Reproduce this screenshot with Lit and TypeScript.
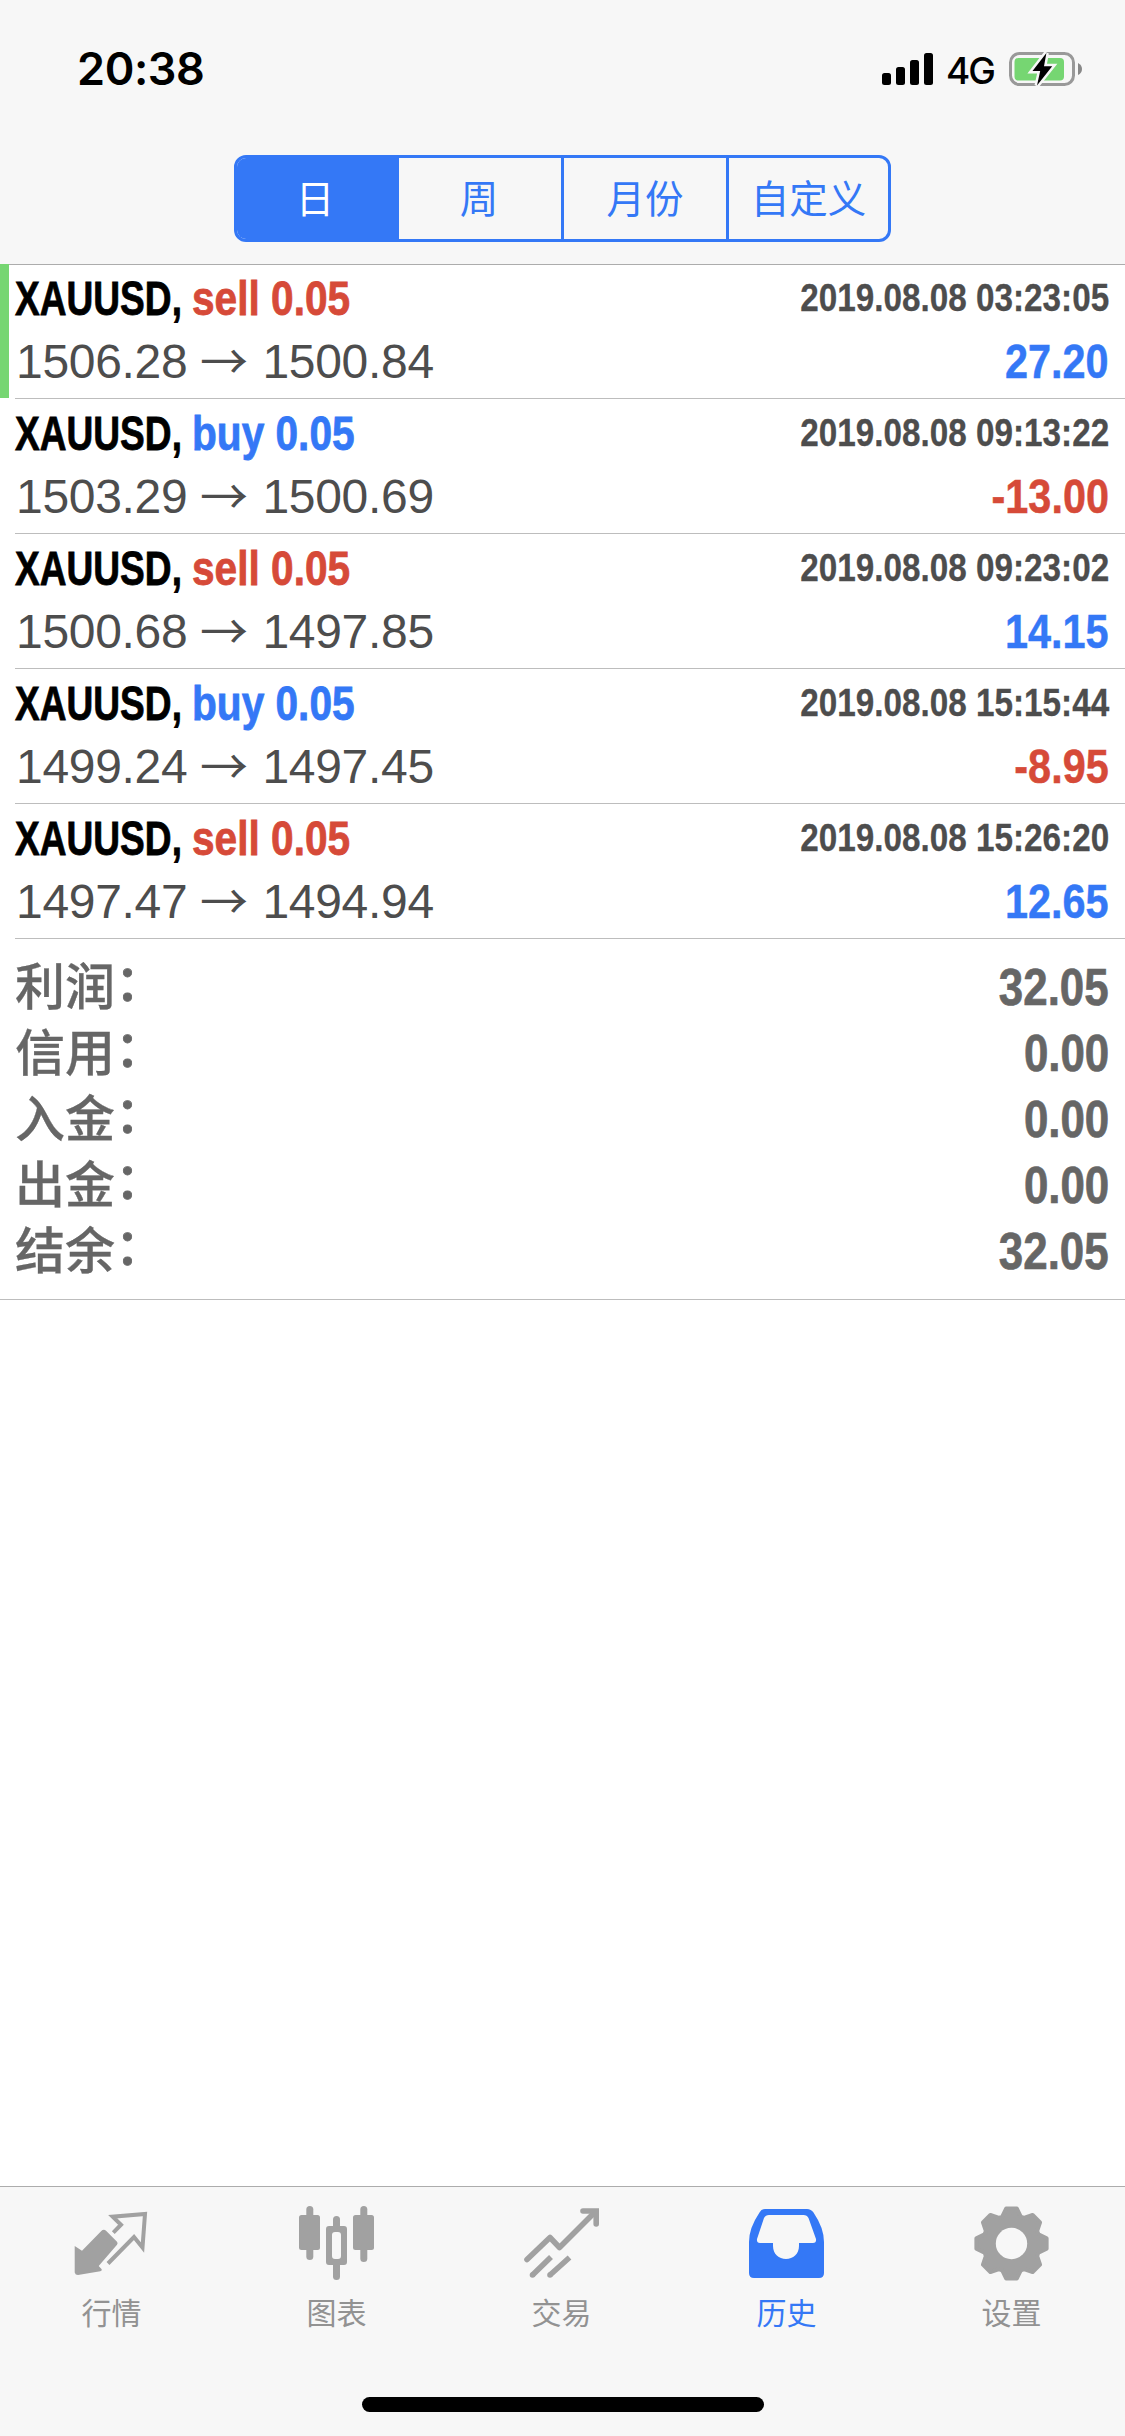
import { LitElement, html, css, svg } from "lit";
import { customElement, property } from "lit/decorators.js";

interface Deal { side: "buy" | "sell"; open: string; close: string; time: string; profit: string; marked?: boolean }

const DEALS: Deal[] = [
  { side: "sell", open: "1506.28", close: "1500.84", time: "2019.08.08 03:23:05", profit: "27.20", marked: true },
  { side: "buy", open: "1503.29", close: "1500.69", time: "2019.08.08 09:13:22", profit: "-13.00" },
  { side: "sell", open: "1500.68", close: "1497.85", time: "2019.08.08 09:23:02", profit: "14.15" },
  { side: "buy", open: "1499.24", close: "1497.45", time: "2019.08.08 15:15:44", profit: "-8.95" },
  { side: "sell", open: "1497.47", close: "1494.94", time: "2019.08.08 15:26:20", profit: "12.65" },
];

const TOTALS: [string, string][] = [["利润", "32.05"], ["信用", "0.00"], ["入金", "0.00"], ["出金", "0.00"], ["结余", "32.05"]];

// Outline of the eight-toothed cog, one tooth every 45 degrees.
const gear = () => {
  const pts: string[] = [];
  for (let i = 0; i < 8; i++) {
    for (const [d, r] of [[-19, 28.5], [-8.5, 35.5], [8.5, 35.5], [19, 28.5]]) {
      const a = ((i * 45 + d) * Math.PI) / 180;
      pts.push(`${(37.5 + r * Math.sin(a)).toFixed(2)},${(37.5 - r * Math.cos(a)).toFixed(2)}`);
    }
  }
  return `M${pts.join("L")}Z`;
};

const ICONS = {
  quotes: svg`<path d="M0.700 40L8 44.700L27.300 25Q29.700 22.700 32.300 25L43 35.700Q44.200 37.200 43 38.700L24.700 60L27.700 63.300Q28.300 65 26.300 65.300L4 69Q1.300 69 0.700 66.500Z" fill="currentColor"/>
    <path d="M39.300 26.700L47 18.700L38.700 10.700L71 8L68.500 41.500L60 31L34 57.500" fill="none" stroke="currentColor" stroke-width="4"/>`,
  chart: svg`<g fill="currentColor"><rect x="7.300" y="0" width="7" height="54" rx="3.500"/><rect x="0" y="9" width="21" height="35" rx="2.500"/>
    <rect x="61.300" y="0" width="7" height="56" rx="3.500"/><rect x="54" y="9" width="21" height="35" rx="2.500"/>
    <rect x="34" y="10" width="7" height="14" rx="3.500"/><rect x="34" y="55" width="7" height="19" rx="3.500"/>
    <path fill-rule="evenodd" d="M30 20H45Q48 20 48 23V56Q48 59 45 59H30Q27 59 27 56V23Q27 20 30 20ZM36 26Q33 26 33 29V50Q33 53 36 53H39Q42 53 42 50V29Q42 26 39 26Z"/></g>`,
  trade: svg`<g fill="none" stroke="currentColor" stroke-width="5.600" stroke-linecap="round" stroke-linejoin="round"><path d="M3 53.500L26 31.500L35.500 41.500L70 7"/><path d="M59 5H72.200V18" stroke-linejoin="miter"/></g>
    <path d="M8.500 69L27 51M26 69L45.500 51.500" fill="none" stroke="currentColor" stroke-width="5.600"/><circle cx="8.500" cy="69" r="2.800" fill="currentColor"/><circle cx="26" cy="69" r="2.800" fill="currentColor"/>`,
  history: svg`<path fill="currentColor" fill-rule="evenodd" d="M16 3H58Q62 3 64.500 6.500Q75 22 75 36V67Q75 72 70 72H5Q0 72 0 67V36Q0 22 10.500 6.500Q12.500 3 16 3ZM20 9Q16.500 9 15 12L8 33Q7.500 37 11 37H24V40C24 48 30 53 37 53S50 48 50 40V37H64Q67.500 37 67 33L59.500 12Q58 9 54.500 9Z"/>`,
  settings: svg`<path d=${gear()} fill="currentColor" stroke="currentColor" stroke-width="4" stroke-linejoin="round"/><circle cx="37.500" cy="37.500" r="15.700" fill="#f7f7f7"/>`,
};

const TABS: [keyof typeof ICONS, string][] = [["quotes", "行情"], ["chart", "图表"], ["trade", "交易"], ["history", "历史"], ["settings", "设置"]];

@customElement("status-bar")
class StatusBar extends LitElement {
  static styles = css`
    :host { display: flex; height: 132px; padding: 0 43px 0 77px; box-sizing: border-box; justify-content: space-between; font-family: Inter, sans-serif; color: #000; }
    .time { font-size: 45px; font-weight: 600; line-height: 54px; margin-top: 42px; letter-spacing: -0.4px; }
    .right { display: flex; align-items: flex-start; }
    .signal { margin-top: 52px; width: 51px; height: 34px; }
    .net { width: 48px; font-size: 37px; font-weight: 450; line-height: 42px; margin: 50px 14px 0 13px; letter-spacing: -2px; }
    .battery { margin-top: 50px; width: 74px; height: 38px; }
  `;
  render() {
    return html`<div class="time">20:38</div>
      <div class="right">
        <svg class="signal" viewBox="0 0 51 34"><rect x="0" y="21" width="9" height="12" rx="2.500"/><rect x="14" y="15" width="9" height="18" rx="2.500"/><rect x="28" y="8" width="9" height="25" rx="2.500"/><rect x="42" y="1" width="9" height="32" rx="2.500"/></svg>
        <div class="net">4G</div>
        <svg class="battery" viewBox="0 0 74 38"><rect x="2.500" y="3.500" width="63" height="31" rx="9" fill="none" stroke="#999" stroke-width="3"/><path d="M70 13Q74 15 74 19T70 25Z" fill="#888"/><rect x="6.500" y="8" width="49.500" height="22.500" rx="4" fill="#76d672"/><path d="M38.400 3L24.500 21H32.200L29 35.500L44.200 16.300H36Z" fill="#000" stroke="#f7f7f7" stroke-width="5" paint-order="stroke"/></svg>
      </div>`;
  }
}

@customElement("deal-row")
class DealRow extends LitElement {
  @property({ attribute: false }) deal!: Deal;
  static styles = css`
    :host { display: flex; height: 135px; flex: none; font-family: "Liberation Sans", sans-serif; }
    .mark { width: 9px; height: 134px; margin-right: 6px; flex: none; }
    .on { background: #76d672; }
    .body { flex: 1; box-sizing: border-box; height: 135px; border-bottom: 1px solid #bdbdbd; padding: 2px 16px 0 0; }
    .line { display: flex; justify-content: space-between; white-space: pre; height: 63px; line-height: 63px; }
    .low { line-height: 64px; }
    .title { display: flex; font-size: 49px; line-height: 65px; font-weight: 700; -webkit-text-stroke: 0.8px currentColor; }
    .name { width: 177px; transform: scaleX(0.757); transform-origin: 0 0; }
    .side { transform: scaleX(0.829); transform-origin: 0 0; }
    .time { font-size: 39px; font-weight: 700; transform: scaleX(0.853); transform-origin: 100% 0; color: #4d4d4d; -webkit-text-stroke: 0.3px currentColor; }
    .profit { font-size: 49px; font-weight: 700; transform: scaleX(0.845); transform-origin: 100% 0; -webkit-text-stroke: 0.5px currentColor; }
    .price { display: flex; font-size: 48px; line-height: 66px; color: #4d4d4d; letter-spacing: -0.3px; padding-left: 1px; }
    .arrow { width: 75px; text-align: center; font-family: "Noto Sans CJK SC", sans-serif; font-weight: 400; letter-spacing: 0; transform: translate(-1px, -4px); }
    .sell, .neg { color: #d64a38; }
    .buy, .pos { color: #3478f6; }
  `;
  render() {
    const d = this.deal;
    return html`<div class="mark ${d.marked ? "on" : ""}"></div>
      <div class="body">
        <div class="line"><div class="title"><span class="name">XAUUSD, </span><span class="side ${d.side}">${d.side} 0.05</span></div><span class="time">${d.time}</span></div>
        <div class="line low"><div class="price"><span>${d.open}</span><span class="arrow">→</span><span>${d.close}</span></div><span class="profit ${d.profit.startsWith("-") ? "neg" : "pos"}">${d.profit}</span></div>
      </div>`;
  }
}

@customElement("app-root")
class AppRoot extends LitElement {
  static styles = css`
    :host { display: flex; flex-direction: column; width: 1125px; height: 2436px; background: #fff; overflow: hidden; font-family: "Liberation Sans", "Noto Sans CJK SC", sans-serif; }
    .head { height: 265px; margin-bottom: -1px; box-sizing: border-box; background: #f7f7f7; border-bottom: 1px solid #acacac; flex: none; }
    .seg { display: flex; width: 657px; height: 87px; box-sizing: border-box; margin: 23px auto 0; border: 3px solid #3478f6; border-radius: 12px; overflow: hidden; }
    .opt { width: 162px; box-sizing: border-box; padding: 0 2px 6px 0; display: flex; align-items: center; justify-content: center; color: #3478f6; font: 400 38.5px "Noto Sans CJK SC", sans-serif; }
    .opt:first-child { background: #3478f6; color: #fff; padding-right: 6px; }
    .opt:nth-child(n + 3) { border-left: 3px solid #3478f6; padding: 0 0 6px; }
    .opt:nth-child(3) { width: 165px; }
    .totals { padding: 15px 16px 15px 15px; border-bottom: 1px solid #bdbdbd; color: #666; }
    .total { display: flex; justify-content: space-between; height: 66px; line-height: 66px; }
    .label { font: 500 50px/66px "Noto Sans CJK SC", sans-serif; margin-top: -4px; -webkit-text-stroke: 0.3px currentColor; }
    .colon { display: inline-block; transform: translate(0, -4px); -webkit-text-stroke: 0.8px currentColor; }
    .value { font-size: 51px; line-height: 68px; font-weight: 700; transform: scaleX(0.86); transform-origin: 100% 0; -webkit-text-stroke: 0.7px currentColor; }
    .space { flex: 1; }
    .foot { height: 250px; box-sizing: border-box; border-top: 1px solid #acacac; background: #f7f7f7; display: flex; flex-direction: column; align-items: center; }
    .tabs { display: flex; width: 1125px; height: 210px; }
    .tab { flex: 1; display: flex; flex-direction: column; align-items: center; padding-top: 19px; padding-right: 2px; color: #929292; font: 400 30px/44px "Noto Sans CJK SC", sans-serif; }
    .tab svg { width: 75px; height: 75px; margin-bottom: 8px; color: #a1a1a1; overflow: visible; }
    .active, .tab.active svg { color: #3478f6; }
    .home { width: 402px; height: 15px; border-radius: 8px; background: #000; }
  `;
  render() {
    return html`
      <div class="head"><status-bar></status-bar>
        <div class="seg">${["日", "周", "月份", "自定义"].map((t) => html`<div class="opt">${t}</div>`)}</div>
      </div>
      ${DEALS.map((d) => html`<deal-row .deal=${d}></deal-row>`)}
      <div class="totals">${TOTALS.map(([l, v]) => html`<div class="total"><span class="label">${l}<span class="colon">：</span></span><span class="value">${v}</span></div>`)}</div>
      <div class="space"></div>
      <div class="foot">
        <div class="tabs">${TABS.map(([i, t]) => html`<div class="tab ${i === "history" ? "active" : ""}"><svg viewBox="0 0 75 75">${ICONS[i]}</svg>${t}</div>`)}</div>
        <div class="home"></div>
      </div>`;
  }
}
